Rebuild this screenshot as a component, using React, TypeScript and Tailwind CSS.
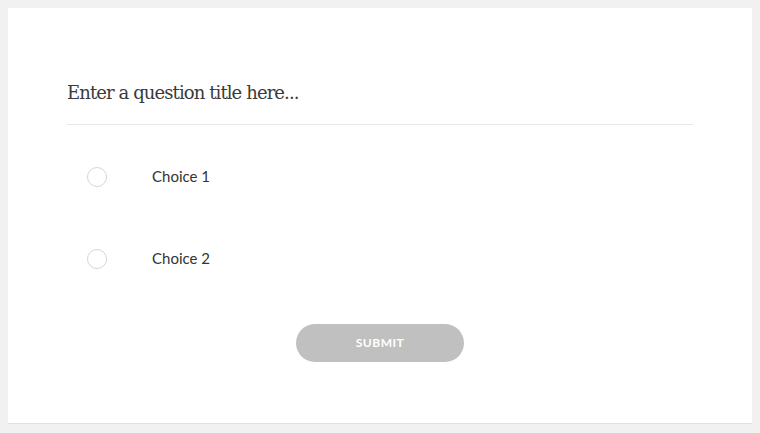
import { useState } from 'react'

const choices = ['Choice 1', 'Choice 2']

export default function App() {
  const [selected, setSelected] = useState<number | null>(null)

  return (
    <div className="min-h-screen bg-[#f1f1f1] p-2 font-['Lato',sans-serif]">
      <div className="bg-white border-b border-[#e0e0e0] px-[59px] pt-[73px] pb-[61px]">
        <h1 className="font-['DejaVu_Serif',serif] text-[18px] leading-6 tracking-[-0.9px] text-[#3a3a3a] pb-[19px] border-b border-[#e8e8e8]">
          Enter a question title here...
        </h1>

        <div className="mt-8 flex flex-col gap-[42px]">
          {choices.map((c, i) => (
            <label key={c} className="flex items-center h-10 cursor-pointer" onClick={() => setSelected(i)}>
              <span className="ml-5 w-5 h-5 rounded-full border border-[#d6d6d6] flex items-center justify-center">
                {selected === i && <span className="w-2.5 h-2.5 rounded-full bg-[#888]" />}
              </span>
              <span className="ml-[45px] -mt-0.5 text-[15px] text-[#333]">{c}</span>
            </label>
          ))}
        </div>

        <div className="mt-[45px] flex justify-center">
          <button className="w-[168px] h-[38px] rounded-full bg-[#c0c0c0] text-white text-[12px] font-bold tracking-[0.5px]">
            SUBMIT
          </button>
        </div>
      </div>
    </div>
  )
}
